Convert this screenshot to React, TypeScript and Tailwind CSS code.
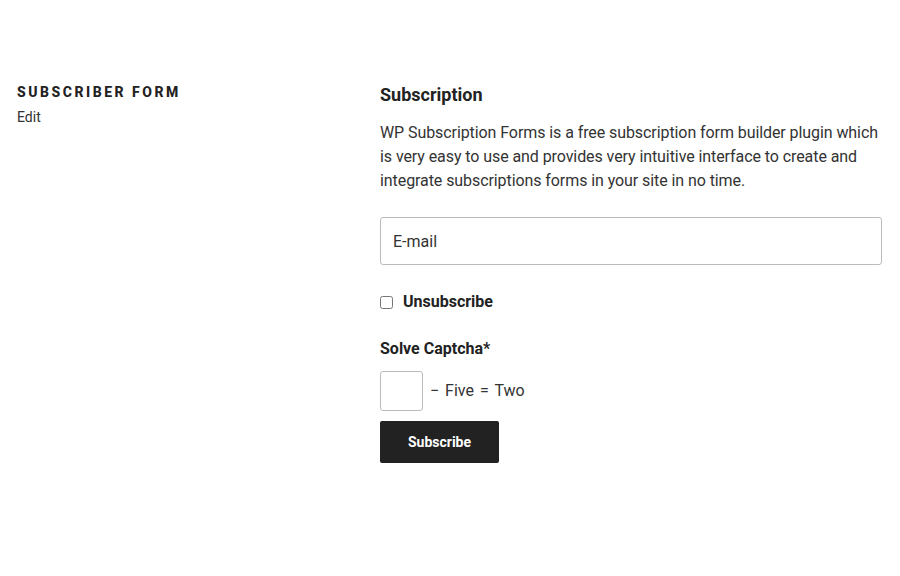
export default function App() {
  return (
    <main
      className="w-[900px] h-[576px] bg-white text-[#333] flex"
      style={{ fontFamily: 'Roboto, "Liberation Sans", sans-serif' }}
    >
      {/* Widget title column */}
      <section className="w-[380px] pl-[17px] pt-[83px]">
        <h2 className="text-[14px] leading-[18px] font-extrabold uppercase tracking-[0.18em] text-[#222]">
          Subscriber Form
        </h2>
        <a className="block mt-[7px] text-[14px] leading-[18px] text-[#333]">Edit</a>
      </section>

      {/* Form column */}
      <section className="w-[502px] pt-[84px]">
        <h3 className="text-[18px] leading-[22px] font-bold text-[#222]">Subscription</h3>
        <p className="mt-[15px] text-[16px] leading-[24px] tracking-[-0.005em] text-[#333]">
          WP Subscription Forms is a free subscription form builder plugin which is very easy to use and
          provides very intuitive interface to create and integrate subscriptions forms in your site in no time.
        </p>

        <input
          type="text"
          placeholder="E-mail"
          className="mt-[24px] block w-full h-[48px] px-[12px] border border-[#bbb] rounded-[3px] text-[16px] text-[#333] placeholder:text-[#333] outline-none"
        />

        <label className="mt-[25px] flex items-center gap-[10px] text-[16px] font-bold text-[#222]">
          <input type="checkbox" className="w-[13px] h-[13px] m-0" />
          Unsubscribe
        </label>

        <div className="mt-[24px] text-[16px] leading-[22px] font-bold text-[#222]">Solve Captcha*</div>

        <div className="mt-[11px] flex items-center gap-[7px]">
          <input
            type="text"
            className="w-[43px] h-[40px] border border-[#bbb] rounded-[3px] outline-none"
          />
          <span className="text-[16px] text-[#333] [word-spacing:2px]">&minus; Five = Two</span>
        </div>

        <button className="mt-[10px] w-[119px] h-[42px] bg-[#222] text-white text-[14px] font-bold rounded-[2px]">
          Subscribe
        </button>
      </section>
    </main>
  );
}
